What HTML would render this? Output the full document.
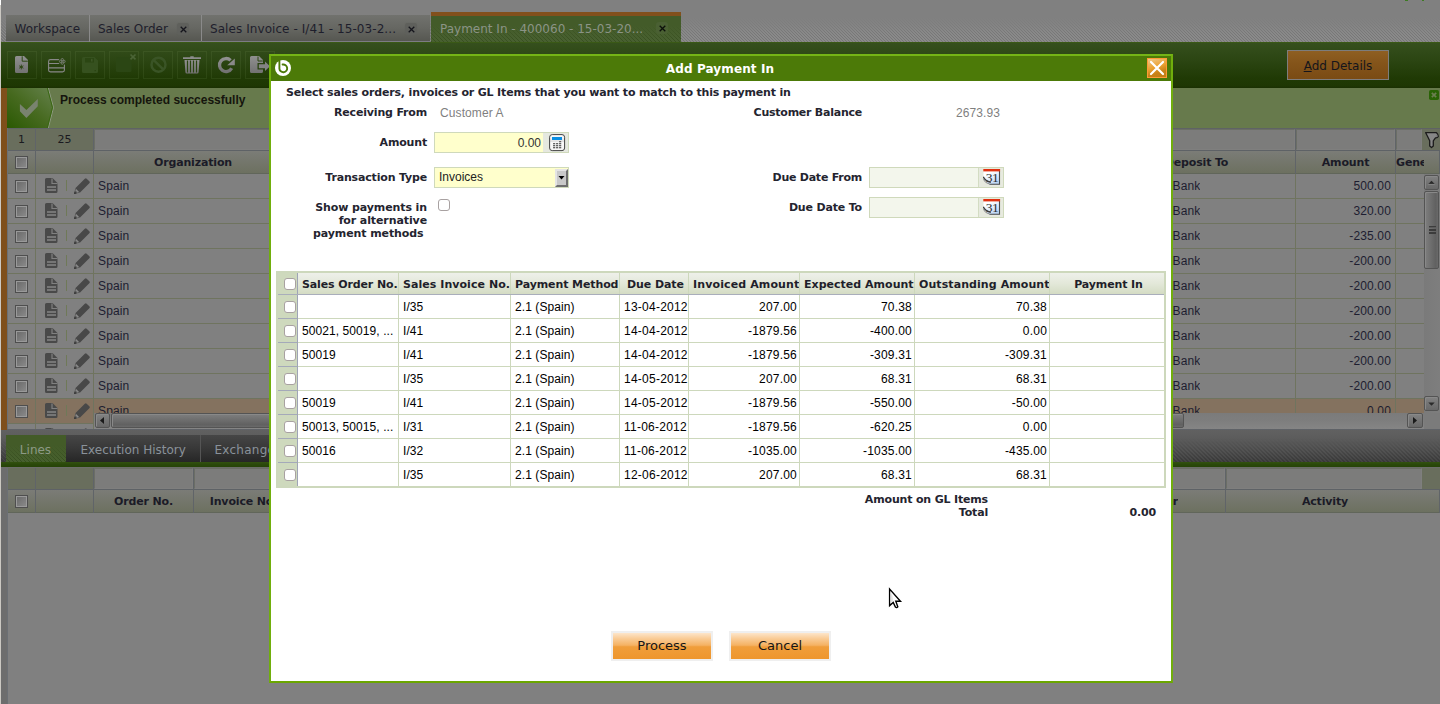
<!DOCTYPE html>
<html>
<head>
<meta charset="utf-8">
<title>Add Payment In</title>
<style>
html,body{margin:0;padding:0;}
body{width:1440px;height:704px;overflow:hidden;position:relative;background:#808080;font-family:"DejaVu Sans","Liberation Sans",sans-serif;font-size:11px;color:#1c1c24;}
.a{position:absolute;}
.dv{font-family:"DejaVu Sans","Liberation Sans",sans-serif;}
.ar{font-family:"Liberation Sans","DejaVu Sans",sans-serif;}
#tabstrip{left:1px;top:18px;width:1439px;height:24px;background:linear-gradient(#808080,rgba(128,128,128,0) 70%),repeating-linear-gradient(45deg,#777 0 1px,#8a8a8a 1px 2.12px);}
.tab{top:15px;height:27px;background:linear-gradient(#71726e,#666762 50%,#565751);color:#1e1e2c;font-size:12px;line-height:29px;white-space:nowrap;box-sizing:border-box;border-bottom:1px solid #7c7c84;}
.tab .t{position:absolute;top:0;}
.tabx{position:absolute;top:8px;width:12px;height:12px;border-radius:3px;background:#5f605c;box-shadow:0 0 1px #5f605c;}
#tabsel{left:431px;top:12px;width:250px;height:30px;background:linear-gradient(#435b29 35%,rgba(67,91,41,0) 90%),repeating-linear-gradient(45deg,#3a5122 0 1px,#486030 1px 2.83px);border-top:4px solid #82501c;box-sizing:border-box;color:#8b9486;font-size:12px;line-height:26px;}
#toolbar{left:1px;top:42px;width:1439px;height:46px;background:linear-gradient(#3e5f12 0,#354f1d 3%,#2c4613 38%,#203a05 78%,#1e3703 95%,#1a3002 100%);}
.tbtn{top:51px;width:30px;height:28px;border:1px solid rgba(160,190,130,0.10);box-sizing:border-box;}
#msg{left:7px;top:88px;width:1433px;height:40px;background:#677a4c;}
#strip{left:1px;top:88px;width:6px;height:342px;background:#7f4f1b;}
#leftedge{left:0;top:0;width:1px;height:704px;background:linear-gradient(#fff 0,#fff 5px,#cbc8c2 5px);}
.hl{height:1px;background:#6f745f;}
.vl{width:1px;background:#6f745f;}
.hdrrow{background:linear-gradient(#7b7c77,#6c705f);}
.hdr{font-weight:bold;font-size:11px;color:#1b1b27;text-align:center;line-height:24px;height:22px;white-space:nowrap;overflow:hidden;letter-spacing:-0.15px;}
.cell{font-family:"Liberation Sans",sans-serif;font-size:12px;color:#1d1d30;letter-spacing:0.15px;line-height:24px;white-space:nowrap;overflow:hidden;}
.cb{width:13px;height:13px;box-sizing:border-box;border:1px solid #4e4e4e;background:linear-gradient(135deg,#686868,#8c8c8c);box-shadow:inset 0 0 0 1px #9a9a9a;}
.fin{background:#7c7c7b;border:1px solid #6b6e66;border-right-color:#7f7f7e;border-bottom-color:#7f7f7e;box-sizing:border-box;}
/* dialog */
#dlg{left:269px;top:54px;width:904px;height:629px;background:#fff;border:2px solid #70ae0c;border-top-color:#75b416;border-bottom-color:#6aa600;box-sizing:border-box;}
#dlgtitle{left:0;top:0;width:898px;height:25px;background:#4c7a08;color:#fff;font-weight:bold;font-size:12px;line-height:26px;text-align:center;letter-spacing:0.12px;overflow:hidden;padding-right:2px;}
.lbl{font-weight:bold;font-size:11px;color:#24242f;text-align:right;white-space:nowrap;line-height:13px;letter-spacing:-0.17px;}
.val{font-family:"Liberation Sans",sans-serif;font-size:12px;color:#7f7f7f;white-space:nowrap;line-height:14px;letter-spacing:0.1px;}
.th{font-weight:bold;font-size:11px;color:#1f1f2b;line-height:23px;white-space:nowrap;overflow:hidden;letter-spacing:-0.08px;}
.td{font-family:"Liberation Sans",sans-serif;font-size:12px;color:#000;line-height:25px;white-space:nowrap;overflow:hidden;letter-spacing:0.08px;height:23px;}
.dl{background:#cdd8bc;}
.dcb{width:12px;height:12px;box-sizing:border-box;border:1px solid #a8a1a1;border-radius:3px;background:#fff;}
.btn{height:30px;width:102px;box-sizing:border-box;border:2px solid #efefef;background:linear-gradient(#fde5ca 0,#f9cb95 22%,#f5b263 47%,#f09e3b 53%,#ee962d 100%);font-size:13px;color:#151515;text-align:center;line-height:26px;}
</style>
</head>
<body>
<div class="a" style="left:1405px;top:0;width:3px;height:1px;background:#3d7a22;"></div><div class="a" style="left:1422px;top:0;width:2px;height:1px;background:#3d7a22;"></div>
<div class="a" id="tabstrip"></div>
<div class="a tab" style="left:6px;width:83px;"><span class="t" style="left:8.500px;">Workspace</span></div><div class="a" style="left:89px;top:15px;width:1px;height:26px;background:#8a8a8a;"></div>
<div class="a tab" style="left:90px;width:111px;"><span class="t" style="left:8px;">Sales Order</span><span class="tabx" style="left:87px;"><svg class="a" style="left:2.500px;top:2.500px" width="7" height="7" viewBox="0 0 7 7"><path d="M0.700 0.700L6.300 6.300M6.300 0.700L0.700 6.300" stroke="#15151c" stroke-width="1.300" fill="none"/></svg></span></div>
<div class="a" style="left:201px;top:15px;width:1px;height:26px;background:#8a8a8a;"></div><div class="a tab" style="left:202px;width:228px;"><span class="t" style="left:8px;letter-spacing:0.07px">Sales Invoice - I/41 - 15-03-2...</span><span class="tabx" style="left:203px;"><svg class="a" style="left:2.500px;top:2.500px" width="7" height="7" viewBox="0 0 7 7"><path d="M0.700 0.700L6.300 6.300M6.300 0.700L0.700 6.300" stroke="#15151c" stroke-width="1.300" fill="none"/></svg></span></div>
<div class="a" id="tabsel"><span class="a" style="left:9px;top:0;white-space:nowrap;">Payment In - 400060 - 15-03-20...</span><span class="tabx" style="left:225px;top:6px;background:#4a6033;box-shadow:none;"><svg class="a" style="left:2.500px;top:2.500px" width="7" height="7" viewBox="0 0 7 7"><path d="M0.700 0.700L6.300 6.300M6.300 0.700L0.700 6.300" stroke="#0c100a" stroke-width="1.300" fill="none"/></svg></span></div>
<div class="a" id="toolbar"></div>
<div class="a tbtn" style="left:7px;"></div>
<div class="a tbtn" style="left:41px;"></div>
<div class="a tbtn" style="left:75px;"></div>
<div class="a tbtn" style="left:109px;"></div>
<div class="a tbtn" style="left:143px;"></div>
<div class="a tbtn" style="left:177px;"></div>
<div class="a tbtn" style="left:211px;"></div>
<div class="a tbtn" style="left:245px;"></div>
<svg class="a" style="left:0;top:42px" width="272" height="46" viewBox="0 0 272 46"><defs><linearGradient id="tg" x1="0" y1="0" x2="0" y2="1"><stop offset="0" stop-color="#909090"/><stop offset="1" stop-color="#727272"/></linearGradient></defs><path d="M16.500 14H24L28 18V29.500A1.500 1.500 0 0 1 26.500 31H16.500A1.500 1.500 0 0 1 15 29.500V15.500A1.500 1.500 0 0 1 16.500 14z" fill="url(#tg)"/><path d="M22.200 14.300V19.200H27.800" fill="none" stroke="#2c4713" stroke-width="1"/><path d="M21.300 22.600V27.400M19.200 23.800L23.400 26.200M23.400 23.800L19.200 26.200" stroke="#2a4410" stroke-width="0.900" fill="none"/><rect x="48.600" y="17.600" width="15.800" height="12.300" rx="1.800" fill="none" stroke="#888" stroke-width="1.100"/><path d="M48.600 21.500H64.400M48.600 25.900H64.400" stroke="#888" stroke-width="1.100"/><circle cx="62.300" cy="19.400" r="3.700" fill="#2e4915"/><circle cx="62.3" cy="17.6" r="1.100" fill="none" stroke="#8a8a8a" stroke-width="0.700"/><circle cx="62.3" cy="21.2" r="1.100" fill="none" stroke="#8a8a8a" stroke-width="0.700"/><circle cx="60.5" cy="19.4" r="1.100" fill="none" stroke="#8a8a8a" stroke-width="0.700"/><circle cx="64.1" cy="19.4" r="1.100" fill="none" stroke="#8a8a8a" stroke-width="0.700"/><path d="M83.500 15H94.500L98 18.500V29.500A1.500 1.500 0 0 1 96.500 31H83.500A1.500 1.500 0 0 1 82 29.500V16.500A1.500 1.500 0 0 1 83.500 15z" fill="#36511f"/><rect x="85" y="16" width="9" height="4.500" fill="#2b4613"/><rect x="91" y="16.800" width="1.600" height="2.800" fill="#3d5727"/><rect x="94.600" y="28" width="1.200" height="1.200" fill="#28420f"/><rect x="116" y="15.500" width="15.500" height="14.500" rx="1.500" fill="#2b4614"/><path d="M130.500 12.500L135.500 17.300M135.500 12.500L130.500 17.300" stroke="#4b6436" stroke-width="1.700"/><circle cx="158.500" cy="22.700" r="7" fill="none" stroke="#3a5426" stroke-width="2.500"/><path d="M153.500 17.800L163.500 27.600" stroke="#3a5426" stroke-width="2.500"/><path d="M183 15.200H201V17H183z M190.300 14.300H193.700V15.200H190.300z" fill="#8c8c8c"/><path d="M184.500 18H199.500L198.600 30A1.500 1.500 0 0 1 197.100 31.500H186.900A1.500 1.500 0 0 1 185.400 30z" fill="url(#tg)"/><path d="M187.500 18.500V30.500M190.500 18.500V30.500M193.500 18.500V30.500M196.500 18.500V30.500" stroke="#2a4511" stroke-width="1.200"/><path d="M230.600 18.400A6.500 6.500 0 1 0 231.700 26.200" fill="none" stroke="url(#tg)" stroke-width="3.300"/><path d="M227.200 23.200H234.800V16.400z" fill="#898989"/><path d="M251.500 14H259L263 18V21H257.500V27.500H263V29.500A1.500 1.500 0 0 1 261.500 31H251.500A1.500 1.500 0 0 1 250 29.500V15.500A1.500 1.500 0 0 1 251.500 14z" fill="url(#tg)"/><path d="M258 14.500V19H262.700" fill="none" stroke="#2c4713" stroke-width="1"/><path d="M258.800 22.300H265V19.500L270 24.300L265 29.100V26.300H258.800z" fill="#838383"/></svg>
<div class="a" style="left:1287px;top:50px;width:102px;height:30px;box-sizing:border-box;border:1px solid #7d7d7d;background:linear-gradient(#8e5f22,#84541a 45%,#7a4b14);font-size:12px;line-height:30px;text-align:center;color:#15151c;"><span style="text-decoration:underline">A</span>dd Details</div>
<div class="a" id="msg"></div>
<svg class="a" style="left:7px;top:88px" width="48" height="40" viewBox="0 0 48 40"><defs><linearGradient id="mg" x1="0" y1="1" x2="1" y2="0"><stop offset="0" stop-color="#2a5902"/><stop offset="0.500" stop-color="#476a20"/><stop offset="1" stop-color="#65814d"/></linearGradient></defs><path d="M0 0H40.700L46 19.500L40.700 40H0z" fill="url(#mg)"/><path d="M41.300 0L46.500 19.500L41.300 40" fill="none" stroke="#929f86" stroke-width="0.900"/><path d="M40.300 0L45.500 19.500L40.300 40" fill="none" stroke="#3a6712" stroke-width="1"/><path d="M12.900 15.900L19.400 22.100L30.800 11.100V18.200L19.400 29.900L12.900 23.300z" fill="#79836f"/></svg>
<div class="a ar" style="left:60px;top:92px;font-weight:bold;font-size:12px;line-height:16px;color:#15150d;white-space:nowrap;">Process completed successfully</div>
<svg class="a" style="left:1429px;top:90px" width="10" height="10" viewBox="0 0 10 10"><rect x="0" y="0" width="10" height="10" rx="1.800" fill="#2a6306"/><path d="M2.800 2.800L7.200 7.200M7.200 2.800L2.800 7.200" stroke="#6c7e52" stroke-width="1.700"/></svg>
<div class="a" id="strip"></div>
<div class="a" style="left:7px;top:128px;width:1433px;height:23px;background:#696e5d;"></div>
<div class="a" style="left:7px;top:128px;width:1433px;height:1px;background:#5f6364;"></div>
<div class="a" style="left:7px;top:150px;width:1433px;height:1px;background:#5e6266;"></div>
<div class="a dv" style="left:8px;top:129px;width:27px;text-align:center;font-size:11px;line-height:21px;color:#1a1a20;">1</div>
<div class="a dv" style="left:36px;top:129px;width:57px;text-align:center;font-size:11px;line-height:21px;color:#1a1a20;">25</div>
<div class="a fin" style="left:94px;top:129px;width:1201px;height:21px;"></div>
<div class="a fin" style="left:1296px;top:129px;width:99px;height:21px;"></div>
<div class="a fin" style="left:1396px;top:129px;width:26px;height:21px;"></div>
<svg class="a" style="left:1424px;top:131px" width="16" height="18" viewBox="0 0 16 18"><path d="M1.700 1.700H12.500Q14.500 3.500 14.300 5.500Q13.500 7 11.500 6.800L9.300 9.800V15L7.500 16.500L5.700 15V9.800z" fill="#878787" stroke="#1c1c1c" stroke-width="1.300" stroke-linejoin="round"/><circle cx="12.600" cy="5" r="0.900" fill="#7a7a7a"/></svg>
<div class="a hdrrow" style="left:7px;top:151px;width:1433px;height:23px;"></div>
<div class="a" style="left:7px;top:173px;width:1433px;height:1px;background:#61665a;"></div>
<div class="a hdr" style="left:94px;top:151px;width:198px;">Organization</div>
<div class="a hdr" style="left:1099px;top:151px;width:195px;">Deposit To</div>
<div class="a hdr" style="left:1296px;top:151px;width:99px;">Amount</div>
<div class="a hdr" style="left:1396px;top:151px;width:28px;text-align:left;">Generated</div>
<div class="a cb" style="left:15px;top:156px;"></div>
<div class="a" style="left:0;top:174px;width:1440px;height:255px;overflow:hidden;">
<div class="a hl" style="left:7px;top:24px;width:1433px;"></div>
<div class="a cb" style="left:15px;top:6px;"></div>
<svg class="a" style="left:45px;top:4px" width="13" height="15" viewBox="0 0 13 15"><path d="M1.500 0h6l5 5v8.500a1.500 1.500 0 0 1-1.500 1.500h-9.500A1.500 1.500 0 0 1 0 13.500v-12A1.500 1.500 0 0 1 1.500 0z" fill="#494949"/><path d="M7 0.500v5h5.500" stroke="#808080" stroke-width="1.200" fill="none"/><path d="M2 9h9M2 12h9" stroke="#858585" stroke-width="1.300"/></svg>
<div class="a" style="left:66px;top:6px;width:1px;height:11px;background:#6f7958;"></div>
<svg class="a" style="left:74px;top:4px" width="16" height="16" viewBox="0 0 16 16"><path d="M10.800 0.700a1.300 1.300 0 0 1 1.900 0l2.600 2.600a1.300 1.300 0 0 1 0 1.900L5.800 14.700L1.300 10.200z" fill="#484848"/><path d="M1.300 10.200L0 16L5.800 14.700z" fill="#5a5a5a"/><path d="M1.800 11.800l2.400 2.400" stroke="#8a8a8a" stroke-width="1.400"/><path d="M0 16l0.600-2.600l2 2z" fill="#333"/></svg>
<div class="a cell" style="left:98px;top:0px;">Spain</div>
<div class="a cell" style="left:1172.500px;top:0px;">Bank</div>
<div class="a cell" style="left:1296px;top:0px;width:95px;text-align:right;">500.00</div>
<div class="a hl" style="left:7px;top:49px;width:1433px;"></div>
<div class="a cb" style="left:15px;top:31px;"></div>
<svg class="a" style="left:45px;top:29px" width="13" height="15" viewBox="0 0 13 15"><path d="M1.500 0h6l5 5v8.500a1.500 1.500 0 0 1-1.500 1.500h-9.500A1.500 1.500 0 0 1 0 13.500v-12A1.500 1.500 0 0 1 1.500 0z" fill="#494949"/><path d="M7 0.500v5h5.500" stroke="#808080" stroke-width="1.200" fill="none"/><path d="M2 9h9M2 12h9" stroke="#858585" stroke-width="1.300"/></svg>
<div class="a" style="left:66px;top:31px;width:1px;height:11px;background:#6f7958;"></div>
<svg class="a" style="left:74px;top:29px" width="16" height="16" viewBox="0 0 16 16"><path d="M10.800 0.700a1.300 1.300 0 0 1 1.900 0l2.600 2.600a1.300 1.300 0 0 1 0 1.900L5.800 14.700L1.300 10.200z" fill="#484848"/><path d="M1.300 10.200L0 16L5.800 14.700z" fill="#5a5a5a"/><path d="M1.800 11.800l2.400 2.400" stroke="#8a8a8a" stroke-width="1.400"/><path d="M0 16l0.600-2.600l2 2z" fill="#333"/></svg>
<div class="a cell" style="left:98px;top:25px;">Spain</div>
<div class="a cell" style="left:1172.500px;top:25px;">Bank</div>
<div class="a cell" style="left:1296px;top:25px;width:95px;text-align:right;">320.00</div>
<div class="a hl" style="left:7px;top:74px;width:1433px;"></div>
<div class="a cb" style="left:15px;top:56px;"></div>
<svg class="a" style="left:45px;top:54px" width="13" height="15" viewBox="0 0 13 15"><path d="M1.500 0h6l5 5v8.500a1.500 1.500 0 0 1-1.500 1.500h-9.500A1.500 1.500 0 0 1 0 13.500v-12A1.500 1.500 0 0 1 1.500 0z" fill="#494949"/><path d="M7 0.500v5h5.500" stroke="#808080" stroke-width="1.200" fill="none"/><path d="M2 9h9M2 12h9" stroke="#858585" stroke-width="1.300"/></svg>
<div class="a" style="left:66px;top:56px;width:1px;height:11px;background:#6f7958;"></div>
<svg class="a" style="left:74px;top:54px" width="16" height="16" viewBox="0 0 16 16"><path d="M10.800 0.700a1.300 1.300 0 0 1 1.900 0l2.600 2.600a1.300 1.300 0 0 1 0 1.900L5.800 14.700L1.300 10.200z" fill="#484848"/><path d="M1.300 10.200L0 16L5.800 14.700z" fill="#5a5a5a"/><path d="M1.800 11.800l2.400 2.400" stroke="#8a8a8a" stroke-width="1.400"/><path d="M0 16l0.600-2.600l2 2z" fill="#333"/></svg>
<div class="a cell" style="left:98px;top:50px;">Spain</div>
<div class="a cell" style="left:1172.500px;top:50px;">Bank</div>
<div class="a cell" style="left:1296px;top:50px;width:95px;text-align:right;">-235.00</div>
<div class="a hl" style="left:7px;top:99px;width:1433px;"></div>
<div class="a cb" style="left:15px;top:81px;"></div>
<svg class="a" style="left:45px;top:79px" width="13" height="15" viewBox="0 0 13 15"><path d="M1.500 0h6l5 5v8.500a1.500 1.500 0 0 1-1.500 1.500h-9.500A1.500 1.500 0 0 1 0 13.500v-12A1.500 1.500 0 0 1 1.500 0z" fill="#494949"/><path d="M7 0.500v5h5.500" stroke="#808080" stroke-width="1.200" fill="none"/><path d="M2 9h9M2 12h9" stroke="#858585" stroke-width="1.300"/></svg>
<div class="a" style="left:66px;top:81px;width:1px;height:11px;background:#6f7958;"></div>
<svg class="a" style="left:74px;top:79px" width="16" height="16" viewBox="0 0 16 16"><path d="M10.800 0.700a1.300 1.300 0 0 1 1.900 0l2.600 2.600a1.300 1.300 0 0 1 0 1.900L5.800 14.700L1.300 10.200z" fill="#484848"/><path d="M1.300 10.200L0 16L5.800 14.700z" fill="#5a5a5a"/><path d="M1.800 11.800l2.400 2.400" stroke="#8a8a8a" stroke-width="1.400"/><path d="M0 16l0.600-2.600l2 2z" fill="#333"/></svg>
<div class="a cell" style="left:98px;top:75px;">Spain</div>
<div class="a cell" style="left:1172.500px;top:75px;">Bank</div>
<div class="a cell" style="left:1296px;top:75px;width:95px;text-align:right;">-200.00</div>
<div class="a hl" style="left:7px;top:124px;width:1433px;"></div>
<div class="a cb" style="left:15px;top:106px;"></div>
<svg class="a" style="left:45px;top:104px" width="13" height="15" viewBox="0 0 13 15"><path d="M1.500 0h6l5 5v8.500a1.500 1.500 0 0 1-1.500 1.500h-9.500A1.500 1.500 0 0 1 0 13.500v-12A1.500 1.500 0 0 1 1.500 0z" fill="#494949"/><path d="M7 0.500v5h5.500" stroke="#808080" stroke-width="1.200" fill="none"/><path d="M2 9h9M2 12h9" stroke="#858585" stroke-width="1.300"/></svg>
<div class="a" style="left:66px;top:106px;width:1px;height:11px;background:#6f7958;"></div>
<svg class="a" style="left:74px;top:104px" width="16" height="16" viewBox="0 0 16 16"><path d="M10.800 0.700a1.300 1.300 0 0 1 1.900 0l2.600 2.600a1.300 1.300 0 0 1 0 1.900L5.800 14.700L1.300 10.200z" fill="#484848"/><path d="M1.300 10.200L0 16L5.800 14.700z" fill="#5a5a5a"/><path d="M1.800 11.800l2.400 2.400" stroke="#8a8a8a" stroke-width="1.400"/><path d="M0 16l0.600-2.600l2 2z" fill="#333"/></svg>
<div class="a cell" style="left:98px;top:100px;">Spain</div>
<div class="a cell" style="left:1172.500px;top:100px;">Bank</div>
<div class="a cell" style="left:1296px;top:100px;width:95px;text-align:right;">-200.00</div>
<div class="a hl" style="left:7px;top:149px;width:1433px;"></div>
<div class="a cb" style="left:15px;top:131px;"></div>
<svg class="a" style="left:45px;top:129px" width="13" height="15" viewBox="0 0 13 15"><path d="M1.500 0h6l5 5v8.500a1.500 1.500 0 0 1-1.500 1.500h-9.500A1.500 1.500 0 0 1 0 13.500v-12A1.500 1.500 0 0 1 1.500 0z" fill="#494949"/><path d="M7 0.500v5h5.500" stroke="#808080" stroke-width="1.200" fill="none"/><path d="M2 9h9M2 12h9" stroke="#858585" stroke-width="1.300"/></svg>
<div class="a" style="left:66px;top:131px;width:1px;height:11px;background:#6f7958;"></div>
<svg class="a" style="left:74px;top:129px" width="16" height="16" viewBox="0 0 16 16"><path d="M10.800 0.700a1.300 1.300 0 0 1 1.900 0l2.600 2.600a1.300 1.300 0 0 1 0 1.900L5.800 14.700L1.300 10.200z" fill="#484848"/><path d="M1.300 10.200L0 16L5.800 14.700z" fill="#5a5a5a"/><path d="M1.800 11.800l2.400 2.400" stroke="#8a8a8a" stroke-width="1.400"/><path d="M0 16l0.600-2.600l2 2z" fill="#333"/></svg>
<div class="a cell" style="left:98px;top:125px;">Spain</div>
<div class="a cell" style="left:1172.500px;top:125px;">Bank</div>
<div class="a cell" style="left:1296px;top:125px;width:95px;text-align:right;">-200.00</div>
<div class="a hl" style="left:7px;top:174px;width:1433px;"></div>
<div class="a cb" style="left:15px;top:156px;"></div>
<svg class="a" style="left:45px;top:154px" width="13" height="15" viewBox="0 0 13 15"><path d="M1.500 0h6l5 5v8.500a1.500 1.500 0 0 1-1.500 1.500h-9.500A1.500 1.500 0 0 1 0 13.500v-12A1.500 1.500 0 0 1 1.500 0z" fill="#494949"/><path d="M7 0.500v5h5.500" stroke="#808080" stroke-width="1.200" fill="none"/><path d="M2 9h9M2 12h9" stroke="#858585" stroke-width="1.300"/></svg>
<div class="a" style="left:66px;top:156px;width:1px;height:11px;background:#6f7958;"></div>
<svg class="a" style="left:74px;top:154px" width="16" height="16" viewBox="0 0 16 16"><path d="M10.800 0.700a1.300 1.300 0 0 1 1.900 0l2.600 2.600a1.300 1.300 0 0 1 0 1.900L5.800 14.700L1.300 10.200z" fill="#484848"/><path d="M1.300 10.200L0 16L5.800 14.700z" fill="#5a5a5a"/><path d="M1.800 11.800l2.400 2.400" stroke="#8a8a8a" stroke-width="1.400"/><path d="M0 16l0.600-2.600l2 2z" fill="#333"/></svg>
<div class="a cell" style="left:98px;top:150px;">Spain</div>
<div class="a cell" style="left:1172.500px;top:150px;">Bank</div>
<div class="a cell" style="left:1296px;top:150px;width:95px;text-align:right;">-200.00</div>
<div class="a hl" style="left:7px;top:199px;width:1433px;"></div>
<div class="a cb" style="left:15px;top:181px;"></div>
<svg class="a" style="left:45px;top:179px" width="13" height="15" viewBox="0 0 13 15"><path d="M1.500 0h6l5 5v8.500a1.500 1.500 0 0 1-1.500 1.500h-9.500A1.500 1.500 0 0 1 0 13.500v-12A1.500 1.500 0 0 1 1.500 0z" fill="#494949"/><path d="M7 0.500v5h5.500" stroke="#808080" stroke-width="1.200" fill="none"/><path d="M2 9h9M2 12h9" stroke="#858585" stroke-width="1.300"/></svg>
<div class="a" style="left:66px;top:181px;width:1px;height:11px;background:#6f7958;"></div>
<svg class="a" style="left:74px;top:179px" width="16" height="16" viewBox="0 0 16 16"><path d="M10.800 0.700a1.300 1.300 0 0 1 1.900 0l2.600 2.600a1.300 1.300 0 0 1 0 1.900L5.800 14.700L1.300 10.200z" fill="#484848"/><path d="M1.300 10.200L0 16L5.800 14.700z" fill="#5a5a5a"/><path d="M1.800 11.800l2.400 2.400" stroke="#8a8a8a" stroke-width="1.400"/><path d="M0 16l0.600-2.600l2 2z" fill="#333"/></svg>
<div class="a cell" style="left:98px;top:175px;">Spain</div>
<div class="a cell" style="left:1172.500px;top:175px;">Bank</div>
<div class="a cell" style="left:1296px;top:175px;width:95px;text-align:right;">-200.00</div>
<div class="a hl" style="left:7px;top:224px;width:1433px;"></div>
<div class="a cb" style="left:15px;top:206px;"></div>
<svg class="a" style="left:45px;top:204px" width="13" height="15" viewBox="0 0 13 15"><path d="M1.500 0h6l5 5v8.500a1.500 1.500 0 0 1-1.500 1.500h-9.500A1.500 1.500 0 0 1 0 13.500v-12A1.500 1.500 0 0 1 1.500 0z" fill="#494949"/><path d="M7 0.500v5h5.500" stroke="#808080" stroke-width="1.200" fill="none"/><path d="M2 9h9M2 12h9" stroke="#858585" stroke-width="1.300"/></svg>
<div class="a" style="left:66px;top:206px;width:1px;height:11px;background:#6f7958;"></div>
<svg class="a" style="left:74px;top:204px" width="16" height="16" viewBox="0 0 16 16"><path d="M10.800 0.700a1.300 1.300 0 0 1 1.900 0l2.600 2.600a1.300 1.300 0 0 1 0 1.900L5.800 14.700L1.300 10.200z" fill="#484848"/><path d="M1.300 10.200L0 16L5.800 14.700z" fill="#5a5a5a"/><path d="M1.800 11.800l2.400 2.400" stroke="#8a8a8a" stroke-width="1.400"/><path d="M0 16l0.600-2.600l2 2z" fill="#333"/></svg>
<div class="a cell" style="left:98px;top:200px;">Spain</div>
<div class="a cell" style="left:1172.500px;top:200px;">Bank</div>
<div class="a cell" style="left:1296px;top:200px;width:95px;text-align:right;">-200.00</div>
<div class="a" style="left:7px;top:225px;width:1433px;height:24px;background:#84725f;"></div>
<div class="a hl" style="left:7px;top:249px;width:1433px;"></div>
<div class="a cb" style="left:15px;top:231px;"></div>
<svg class="a" style="left:45px;top:229px" width="13" height="15" viewBox="0 0 13 15"><path d="M1.500 0h6l5 5v8.500a1.500 1.500 0 0 1-1.500 1.500h-9.500A1.500 1.500 0 0 1 0 13.500v-12A1.500 1.500 0 0 1 1.500 0z" fill="#494949"/><path d="M7 0.500v5h5.500" stroke="#808080" stroke-width="1.200" fill="none"/><path d="M2 9h9M2 12h9" stroke="#858585" stroke-width="1.300"/></svg>
<div class="a" style="left:66px;top:231px;width:1px;height:11px;background:#6f7958;"></div>
<svg class="a" style="left:74px;top:229px" width="16" height="16" viewBox="0 0 16 16"><path d="M10.800 0.700a1.300 1.300 0 0 1 1.900 0l2.600 2.600a1.300 1.300 0 0 1 0 1.900L5.800 14.700L1.300 10.200z" fill="#484848"/><path d="M1.300 10.200L0 16L5.800 14.700z" fill="#5a5a5a"/><path d="M1.800 11.800l2.400 2.400" stroke="#8a8a8a" stroke-width="1.400"/><path d="M0 16l0.600-2.600l2 2z" fill="#333"/></svg>
<div class="a cell" style="left:98px;top:225px;">Spain</div>
<div class="a cell" style="left:1172.500px;top:225px;">Bank</div>
<div class="a cell" style="left:1296px;top:225px;width:95px;text-align:right;">0.00</div>
<div class="a hl" style="left:7px;top:274px;width:1433px;"></div>
<div class="a cb" style="left:15px;top:256px;"></div>
<svg class="a" style="left:45px;top:254px" width="13" height="15" viewBox="0 0 13 15"><path d="M1.500 0h6l5 5v8.500a1.500 1.500 0 0 1-1.500 1.500h-9.500A1.500 1.500 0 0 1 0 13.500v-12A1.500 1.500 0 0 1 1.500 0z" fill="#494949"/><path d="M7 0.500v5h5.500" stroke="#808080" stroke-width="1.200" fill="none"/><path d="M2 9h9M2 12h9" stroke="#858585" stroke-width="1.300"/></svg>
<div class="a" style="left:66px;top:256px;width:1px;height:11px;background:#6f7958;"></div>
<svg class="a" style="left:74px;top:254px" width="16" height="16" viewBox="0 0 16 16"><path d="M10.800 0.700a1.300 1.300 0 0 1 1.900 0l2.600 2.600a1.300 1.300 0 0 1 0 1.900L5.800 14.700L1.300 10.200z" fill="#484848"/><path d="M1.300 10.200L0 16L5.800 14.700z" fill="#5a5a5a"/><path d="M1.800 11.800l2.400 2.400" stroke="#8a8a8a" stroke-width="1.400"/><path d="M0 16l0.600-2.600l2 2z" fill="#333"/></svg>
</div>
<div class="a vl" style="left:7px;top:128px;height:302px;background:#6b6f74;"></div>
<div class="a vl" style="left:35px;top:128px;height:301px;"></div>
<div class="a" style="left:35px;top:128px;width:1px;height:46px;background:#606468;"></div>
<div class="a vl" style="left:93px;top:128px;height:301px;"></div>
<div class="a" style="left:93px;top:128px;width:1px;height:46px;background:#606468;"></div>
<div class="a vl" style="left:1295px;top:128px;height:286px;"></div>
<div class="a" style="left:1295px;top:128px;width:1px;height:46px;background:#606468;"></div>
<div class="a vl" style="left:1395px;top:128px;height:286px;"></div>
<div class="a" style="left:1395px;top:128px;width:1px;height:46px;background:#606468;"></div>
<div class="a" style="left:1439px;top:151px;width:1px;height:23px;background:#606468;"></div>
<div class="a" style="left:1424px;top:174px;width:16px;height:239px;background:linear-gradient(90deg,#7a7a7a,#7e7e7e);"></div>
<div class="a" style="left:1424px;top:175px;width:15px;height:15px;box-sizing:border-box;border:1px solid #545454;border-radius:2px;box-shadow:inset 1px 1px 0 #898989;background:linear-gradient(#828282,#747474 50%,#686868);"></div>
<svg class="a" style="left:1428px;top:180px" width="7" height="5" viewBox="0 0 7 5"><path d="M0.300 4L3.500 0.800L6.700 4z" fill="#2a2a2a"/><path d="M0.300 4.400H6.700" stroke="#8a8a8a" stroke-width="0.800"/></svg>
<div class="a" style="left:1424px;top:191px;width:15px;height:78px;box-sizing:border-box;border:1px solid #545454;border-radius:2px;box-shadow:inset 1px 1px 0 #898989;background:linear-gradient(90deg,#7e7e7e,#707070 40%,#616161 82%,#6a6a6a);"></div>
<div class="a" style="left:1429px;top:226px;width:7px;height:2px;background:linear-gradient(#2e2e2e,#6a6a6a);box-shadow:0 3px 0 #3c3c3c,0 6px 0 #3c3c3c;"></div>
<div class="a" style="left:1424px;top:396px;width:15px;height:15px;box-sizing:border-box;border:1px solid #545454;border-radius:2px;box-shadow:inset 1px 1px 0 #898989;background:linear-gradient(#828282,#747474 50%,#686868);"></div>
<svg class="a" style="left:1428px;top:402px" width="7" height="5" viewBox="0 0 7 5"><path d="M0.300 0.600L3.500 3.800L6.700 0.600z" fill="#2a2a2a"/></svg>
<div class="a" style="left:94px;top:413px;width:1346px;height:16px;background:linear-gradient(#7b7b7b,#7e7e7e 50%,#858585);"></div>
<div class="a" style="left:1424px;top:413px;width:16px;height:16px;background:#7b7b7b;"></div>
<div class="a" style="left:95px;top:413px;width:15px;height:15px;box-sizing:border-box;border:1px solid #545454;border-radius:2px;box-shadow:inset 1px 1px 0 #898989;background:linear-gradient(#828282,#747474 50%,#686868);"></div>
<svg class="a" style="left:100px;top:417px" width="4" height="7" viewBox="0 0 4 7"><path d="M4 0L0 3.500L4 7z" fill="#1a1a1a"/></svg>
<div class="a" style="left:111px;top:413px;width:1073px;height:15px;box-sizing:border-box;border:1px solid #545454;border-radius:2px;box-shadow:inset 1px 1px 0 #898989;background:linear-gradient(#7e7e7e,#707070 40%,#616161 82%,#6a6a6a);"></div>
<div class="a" style="left:1407px;top:413px;width:16px;height:15px;box-sizing:border-box;border:1px solid #545454;border-radius:2px;box-shadow:inset 1px 1px 0 #898989;background:linear-gradient(#828282,#747474 50%,#686868);"></div>
<svg class="a" style="left:1413px;top:417px" width="4" height="7" viewBox="0 0 4 7"><path d="M0 0L4 3.500L0 7z" fill="#1a1a1a"/></svg>
<div class="a" style="left:7px;top:429px;width:1433px;height:1px;background:#5f6267;"></div>
<div class="a" style="left:1px;top:430px;width:1439px;height:33px;background:linear-gradient(#616161 0,#5c5c5c 25%,#4e4e4e 60%,#393939 100%);"></div>
<div class="a" style="left:1px;top:438px;width:1439px;height:24px;background:repeating-linear-gradient(45deg,rgba(255,255,255,0.045) 0 1px,rgba(0,0,0,0.04) 1px 2.83px);-webkit-mask-image:linear-gradient(transparent,#000 60%);mask-image:linear-gradient(transparent,#000 60%);"></div>
<div class="a" style="left:6px;top:435px;width:60px;height:28px;background:linear-gradient(#435b28 35%,rgba(67,91,40,0) 95%),repeating-linear-gradient(45deg,#374e20 0 1px,#47602e 1px 2.83px);"></div>
<div class="a dv" style="left:6px;top:436px;width:59px;text-align:center;font-size:12px;line-height:28px;color:#8d9a86;">Lines</div>
<div class="a" style="left:66px;top:435px;width:1107px;height:28px;background:linear-gradient(#464646,#373737 50%,#252525);"></div>
<div class="a" style="left:200px;top:435px;width:1px;height:28px;background:#555;"></div>
<div class="a dv" style="left:80.500px;top:436px;font-size:12px;line-height:28px;color:#8a929a;white-space:nowrap;">Execution History</div>
<div class="a dv" style="left:214.500px;top:436px;font-size:12px;line-height:28px;color:#8a929a;white-space:nowrap;letter-spacing:0.25px;">Exchange Rates</div>
<div class="a" style="left:1px;top:462px;width:1439px;height:5px;background:linear-gradient(#32510f,#2a480a 50%,#264307);"></div>
<div class="a" style="left:1px;top:467px;width:1439px;height:1px;background:#6c6e6a;"></div>
<div class="a" style="left:7px;top:468px;width:1433px;height:22px;background:#696e5d;"></div>
<div class="a fin" style="left:94px;top:468px;width:99px;height:21px;"></div>
<div class="a fin" style="left:194px;top:468px;width:1031px;height:21px;"></div>
<div class="a fin" style="left:1226px;top:468px;width:196px;height:21px;"></div>
<div class="a" style="left:7px;top:489px;width:1433px;height:1px;background:#5e6266;"></div>
<div class="a hdrrow" style="left:7px;top:490px;width:1433px;height:23px;"></div>
<div class="a" style="left:7px;top:512px;width:1433px;height:1px;background:#61665a;"></div>
<div class="a hdr" style="left:94px;top:490px;width:99px;">Order No.</div>
<div class="a hdr" style="left:194px;top:490px;width:99px;">Invoice No.</div>
<div class="a hdr" style="left:1226px;top:490px;width:198px;">Activity</div>
<div class="a hdr" style="left:1080px;top:490px;width:98px;text-align:right;">Order</div>
<div class="a cb" style="left:15px;top:495px;"></div>
<div class="a vl" style="left:7px;top:468px;height:236px;background:#6b6f74;"></div>
<div class="a vl" style="left:35px;top:468px;height:45px;background:#606468;"></div>
<div class="a vl" style="left:93px;top:468px;height:45px;background:#606468;"></div>
<div class="a vl" style="left:193px;top:468px;height:45px;background:#606468;"></div>
<div class="a vl" style="left:1225px;top:468px;height:45px;background:#606468;"></div>
<div class="a vl" style="left:1439px;top:490px;height:23px;background:#606468;"></div>
<div class="a" style="left:8px;top:513px;width:1432px;height:191px;background:#808080;"></div>
<div class="a" style="left:1px;top:467px;width:6px;height:237px;background:#6d6d6d;"></div>
<div class="a" id="leftedge"></div>
<div class="a" id="dlg">
<div class="a" id="dlgtitle">Add Payment In</div>
<svg class="a" style="left:2px;top:2px" width="20" height="20" viewBox="0 0 20 20"><circle cx="10" cy="10" r="8" fill="#fff"/><path d="M6.400 2.300V10.600A3.900 3.900 0 1 0 9.600 6.500" stroke="#4c7a08" stroke-width="1.900" fill="none" stroke-linecap="round"/></svg>
<div class="a" style="left:876px;top:2px;width:20px;height:20px;box-sizing:border-box;border:1px solid #ff9a36;background:linear-gradient(160deg,#f1c98c 0,#eba02f 45%,#c98217 70%,#c27c14 100%);"></div>
<svg class="a" style="left:876px;top:2px" width="20" height="20" viewBox="0 0 20 20"><path d="M4 4L16 16M16 4L4 16" stroke="#fff" stroke-width="2.200" stroke-linecap="round"/></svg>
</div>
<div class="a lbl" style="left:286px;top:86px;text-align:left;">Select sales orders, invoices or GL Items that you want to match to this payment in</div>
<div class="a lbl" style="right:1013px;top:106px;">Receiving From</div>
<div class="a val" style="left:440px;top:106px;">Customer A</div>
<div class="a lbl" style="right:578px;top:106px;letter-spacing:-0.24px;">Customer Balance</div>
<div class="a val" style="left:956px;top:106px;">2673.93</div>
<div class="a lbl" style="right:1013px;top:136px;">Amount</div>
<div class="a" style="left:434px;top:132px;width:135px;height:21px;box-sizing:border-box;border:1px solid #cfd9bb;background:#ffffcc;"></div>
<div class="a" style="left:543px;top:133px;width:25px;height:19px;background:#e5e8df;"></div>
<div class="a ar" style="left:436px;top:134px;width:105px;text-align:right;font-size:12px;line-height:19px;color:#333;">0.00</div>
<svg class="a" style="left:548px;top:133px" width="18" height="19" viewBox="0 0 18 19"><defs><linearGradient id="cg" x1="0" y1="0" x2="0" y2="1"><stop offset="0" stop-color="#fff"/><stop offset="0.450" stop-color="#e2e2e2"/><stop offset="0.500" stop-color="#fafafa"/><stop offset="1" stop-color="#f4f4f4"/></linearGradient></defs><rect x="1.600" y="1.600" width="15" height="16" rx="2.600" fill="url(#cg)" stroke="#444" stroke-width="1"/><rect x="4" y="4" width="10" height="3" fill="#0a8fe3"/><rect x="11" y="8.300" width="2.300" height="1" rx="0.400" fill="#333"/><g fill="#2e2e2e"><rect x="5" y="10.2" width="2.300" height="1.100" rx="0.400"/><rect x="8" y="10.2" width="2.300" height="1.100" rx="0.400"/><rect x="11" y="10.2" width="2.300" height="1.100" rx="0.400"/><rect x="5" y="12.2" width="2.300" height="1.100" rx="0.400"/><rect x="8" y="12.2" width="2.300" height="1.100" rx="0.400"/><rect x="11" y="12.2" width="2.300" height="1.100" rx="0.400"/><rect x="5" y="14.2" width="2.300" height="1.100" rx="0.400"/><rect x="8" y="14.2" width="2.300" height="1.100" rx="0.400"/><rect x="11" y="14.2" width="2.300" height="1.100" rx="0.400"/></g></svg>
<div class="a lbl" style="right:1013px;top:171px;">Transaction Type</div>
<div class="a" style="left:434px;top:167px;width:135px;height:21px;box-sizing:border-box;border:1px solid #cfd9bb;background:#ffffcc;"></div>
<div class="a ar" style="left:439px;top:168px;font-size:12px;line-height:19px;color:#222;">Invoices</div>
<div class="a" style="left:555px;top:169px;width:13px;height:18px;box-sizing:border-box;background:#c9c9c9;border:2px solid;border-color:#e4e4e4 #6e6e6e #6e6e6e #e4e4e4;"></div>
<svg class="a" style="left:558px;top:176px" width="7" height="4" viewBox="0 0 7 4"><path d="M0.500 0h6L3.500 3.500z" fill="#000"/></svg>
<div class="a lbl" style="right:1013px;top:201px;letter-spacing:-0.1px;">Show payments in<br>for alternative<br><span style="padding-right:3.500px">payment methods</span></div>
<div class="a dcb" style="left:438px;top:199px;"></div>
<div class="a lbl" style="right:578px;top:171px;letter-spacing:-0.24px;">Due Date From</div>
<div class="a lbl" style="right:578px;top:201px;">Due Date To</div>
<div class="a" style="left:869px;top:167px;width:135px;height:21px;box-sizing:border-box;border:1px solid #cfd9bb;background:#f3f6ec;"></div>
<div class="a" style="left:978px;top:168px;width:25px;height:19px;background:#e7eadf;border-left:1px solid #d3dcc3;box-sizing:border-box;"></div>
<svg class="a" style="left:983px;top:169px" width="18" height="17" viewBox="0 0 18 17"><defs><linearGradient id="kg169" x1="0" y1="0" x2="0.600" y2="1"><stop offset="0.350" stop-color="#fff"/><stop offset="1" stop-color="#bcd6f6"/></linearGradient></defs><path d="M0.500 0H17V15.500H7Q1.500 14 0.500 8z" fill="url(#kg169)"/><path d="M16.500 2V15.300H6.500" fill="none" stroke="#4a4a4a" stroke-width="1.100"/><rect x="0.300" y="0" width="16.800" height="2.400" fill="#e2300f"/><text x="9" y="12.800" font-family="Liberation Serif, serif" font-size="13.500" text-anchor="middle" fill="#2e2e2e" letter-spacing="-0.500">31</text><path d="M0.300 7.800Q2 12 7.800 13.300" fill="none" stroke="#3a3a3a" stroke-width="1.300"/><path d="M0.300 10.300Q1.800 14 7 15.300" fill="none" stroke="#8a8a8a" stroke-width="1"/><path d="M0 11.500Q1 15 5.500 16.500H0z" fill="#e7eadf"/></svg>
<div class="a" style="left:869px;top:197px;width:135px;height:21px;box-sizing:border-box;border:1px solid #cfd9bb;background:#f3f6ec;"></div>
<div class="a" style="left:978px;top:198px;width:25px;height:19px;background:#e7eadf;border-left:1px solid #d3dcc3;box-sizing:border-box;"></div>
<svg class="a" style="left:983px;top:199px" width="18" height="17" viewBox="0 0 18 17"><defs><linearGradient id="kg199" x1="0" y1="0" x2="0.600" y2="1"><stop offset="0.350" stop-color="#fff"/><stop offset="1" stop-color="#bcd6f6"/></linearGradient></defs><path d="M0.500 0H17V15.500H7Q1.500 14 0.500 8z" fill="url(#kg199)"/><path d="M16.500 2V15.300H6.500" fill="none" stroke="#4a4a4a" stroke-width="1.100"/><rect x="0.300" y="0" width="16.800" height="2.400" fill="#e2300f"/><text x="9" y="12.800" font-family="Liberation Serif, serif" font-size="13.500" text-anchor="middle" fill="#2e2e2e" letter-spacing="-0.500">31</text><path d="M0.300 7.800Q2 12 7.800 13.300" fill="none" stroke="#3a3a3a" stroke-width="1.300"/><path d="M0.300 10.300Q1.800 14 7 15.300" fill="none" stroke="#8a8a8a" stroke-width="1"/><path d="M0 11.500Q1 15 5.500 16.500H0z" fill="#e7eadf"/></svg>
<div class="a dl" style="left:276px;top:271px;width:890px;height:217px;"></div>
<div class="a" style="left:278px;top:273px;width:886px;height:213px;background:#fff;"></div>
<div class="a" style="left:278px;top:273px;width:886px;height:21px;background:linear-gradient(#eef0ea,#e3e8d9 50%,#d4dcc4);"></div>
<div class="a" style="left:278px;top:273px;width:19px;height:213px;background:#ced9bd;"></div>
<div class="a th" style="left:302px;top:273px;width:96px;letter-spacing:-0.12px">Sales Order No.</div>
<div class="a th" style="left:403px;top:273px;width:107px;letter-spacing:0.05px">Sales Invoice No.</div>
<div class="a th" style="left:515px;top:273px;width:104px;letter-spacing:-0.1px">Payment Method</div>
<div class="a th" style="left:621px;top:273px;width:69px;text-align:center;letter-spacing:-0.08px">Due Date</div>
<div class="a th" style="left:693px;top:273px;width:106px;letter-spacing:0.12px">Invoiced Amount</div>
<div class="a th" style="left:804px;top:273px;width:110px;letter-spacing:0.02px">Expected Amount</div>
<div class="a th" style="left:919px;top:273px;width:130px;letter-spacing:0.08px">Outstanding Amount</div>
<div class="a th" style="left:1051px;top:273px;width:115px;text-align:center;letter-spacing:-0.12px">Payment In</div>
<div class="a dcb" style="left:284px;top:278px;"></div>
<div class="a" style="left:278px;top:294px;width:886px;height:1px;background:#a9aebb;z-index:2"></div>
<div class="a dl" style="left:298px;top:294px;width:866px;height:1px;"></div>
<div class="a" style="left:278px;top:294px;width:20px;height:1px;background:#a4a9b9;"></div>
<div class="a dcb" style="left:284px;top:301px;"></div>
<div class="a td" style="left:403px;top:295px;width:107px;">I/35</div>
<div class="a td" style="left:515px;top:295px;width:104px;">2.1 (Spain)</div>
<div class="a td" style="left:624px;top:295px;width:64px;letter-spacing:0.24px;">13-04-2012</div>
<div class="a td" style="left:689px;top:295px;width:108px;text-align:right;letter-spacing:0.2px">207.00</div>
<div class="a td" style="left:800px;top:295px;width:112px;text-align:right;letter-spacing:0.2px">70.38</div>
<div class="a td" style="left:915px;top:295px;width:132px;text-align:right;letter-spacing:0.2px">70.38</div>
<div class="a dl" style="left:298px;top:318px;width:866px;height:1px;"></div>
<div class="a" style="left:278px;top:318px;width:20px;height:1px;background:#a4a9b9;"></div>
<div class="a dcb" style="left:284px;top:325px;"></div>
<div class="a td" style="left:302px;top:319px;width:96px;">50021, 50019, ...</div>
<div class="a td" style="left:403px;top:319px;width:107px;">I/41</div>
<div class="a td" style="left:515px;top:319px;width:104px;">2.1 (Spain)</div>
<div class="a td" style="left:624px;top:319px;width:64px;letter-spacing:0.24px;">14-04-2012</div>
<div class="a td" style="left:689px;top:319px;width:108px;text-align:right;letter-spacing:0.2px">-1879.56</div>
<div class="a td" style="left:800px;top:319px;width:112px;text-align:right;letter-spacing:0.2px">-400.00</div>
<div class="a td" style="left:915px;top:319px;width:132px;text-align:right;letter-spacing:0.2px">0.00</div>
<div class="a dl" style="left:298px;top:342px;width:866px;height:1px;"></div>
<div class="a" style="left:278px;top:342px;width:20px;height:1px;background:#a4a9b9;"></div>
<div class="a dcb" style="left:284px;top:349px;"></div>
<div class="a td" style="left:302px;top:343px;width:96px;">50019</div>
<div class="a td" style="left:403px;top:343px;width:107px;">I/41</div>
<div class="a td" style="left:515px;top:343px;width:104px;">2.1 (Spain)</div>
<div class="a td" style="left:624px;top:343px;width:64px;letter-spacing:0.24px;">14-04-2012</div>
<div class="a td" style="left:689px;top:343px;width:108px;text-align:right;letter-spacing:0.2px">-1879.56</div>
<div class="a td" style="left:800px;top:343px;width:112px;text-align:right;letter-spacing:0.2px">-309.31</div>
<div class="a td" style="left:915px;top:343px;width:132px;text-align:right;letter-spacing:0.2px">-309.31</div>
<div class="a dl" style="left:298px;top:366px;width:866px;height:1px;"></div>
<div class="a" style="left:278px;top:366px;width:20px;height:1px;background:#a4a9b9;"></div>
<div class="a dcb" style="left:284px;top:373px;"></div>
<div class="a td" style="left:403px;top:367px;width:107px;">I/35</div>
<div class="a td" style="left:515px;top:367px;width:104px;">2.1 (Spain)</div>
<div class="a td" style="left:624px;top:367px;width:64px;letter-spacing:0.24px;">14-05-2012</div>
<div class="a td" style="left:689px;top:367px;width:108px;text-align:right;letter-spacing:0.2px">207.00</div>
<div class="a td" style="left:800px;top:367px;width:112px;text-align:right;letter-spacing:0.2px">68.31</div>
<div class="a td" style="left:915px;top:367px;width:132px;text-align:right;letter-spacing:0.2px">68.31</div>
<div class="a dl" style="left:298px;top:390px;width:866px;height:1px;"></div>
<div class="a" style="left:278px;top:390px;width:20px;height:1px;background:#a4a9b9;"></div>
<div class="a dcb" style="left:284px;top:397px;"></div>
<div class="a td" style="left:302px;top:391px;width:96px;">50019</div>
<div class="a td" style="left:403px;top:391px;width:107px;">I/41</div>
<div class="a td" style="left:515px;top:391px;width:104px;">2.1 (Spain)</div>
<div class="a td" style="left:624px;top:391px;width:64px;letter-spacing:0.24px;">14-05-2012</div>
<div class="a td" style="left:689px;top:391px;width:108px;text-align:right;letter-spacing:0.2px">-1879.56</div>
<div class="a td" style="left:800px;top:391px;width:112px;text-align:right;letter-spacing:0.2px">-550.00</div>
<div class="a td" style="left:915px;top:391px;width:132px;text-align:right;letter-spacing:0.2px">-50.00</div>
<div class="a dl" style="left:298px;top:414px;width:866px;height:1px;"></div>
<div class="a" style="left:278px;top:414px;width:20px;height:1px;background:#a4a9b9;"></div>
<div class="a dcb" style="left:284px;top:421px;"></div>
<div class="a td" style="left:302px;top:415px;width:96px;">50013, 50015, ...</div>
<div class="a td" style="left:403px;top:415px;width:107px;">I/31</div>
<div class="a td" style="left:515px;top:415px;width:104px;">2.1 (Spain)</div>
<div class="a td" style="left:624px;top:415px;width:64px;letter-spacing:0.24px;">11-06-2012</div>
<div class="a td" style="left:689px;top:415px;width:108px;text-align:right;letter-spacing:0.2px">-1879.56</div>
<div class="a td" style="left:800px;top:415px;width:112px;text-align:right;letter-spacing:0.2px">-620.25</div>
<div class="a td" style="left:915px;top:415px;width:132px;text-align:right;letter-spacing:0.2px">0.00</div>
<div class="a dl" style="left:298px;top:438px;width:866px;height:1px;"></div>
<div class="a" style="left:278px;top:438px;width:20px;height:1px;background:#a4a9b9;"></div>
<div class="a dcb" style="left:284px;top:445px;"></div>
<div class="a td" style="left:302px;top:439px;width:96px;">50016</div>
<div class="a td" style="left:403px;top:439px;width:107px;">I/32</div>
<div class="a td" style="left:515px;top:439px;width:104px;">2.1 (Spain)</div>
<div class="a td" style="left:624px;top:439px;width:64px;letter-spacing:0.24px;">11-06-2012</div>
<div class="a td" style="left:689px;top:439px;width:108px;text-align:right;letter-spacing:0.2px">-1035.00</div>
<div class="a td" style="left:800px;top:439px;width:112px;text-align:right;letter-spacing:0.2px">-1035.00</div>
<div class="a td" style="left:915px;top:439px;width:132px;text-align:right;letter-spacing:0.2px">-435.00</div>
<div class="a dl" style="left:298px;top:462px;width:866px;height:1px;"></div>
<div class="a" style="left:278px;top:462px;width:20px;height:1px;background:#a4a9b9;"></div>
<div class="a dcb" style="left:284px;top:469px;"></div>
<div class="a td" style="left:403px;top:463px;width:107px;">I/35</div>
<div class="a td" style="left:515px;top:463px;width:104px;">2.1 (Spain)</div>
<div class="a td" style="left:624px;top:463px;width:64px;letter-spacing:0.24px;">12-06-2012</div>
<div class="a td" style="left:689px;top:463px;width:108px;text-align:right;letter-spacing:0.2px">207.00</div>
<div class="a td" style="left:800px;top:463px;width:112px;text-align:right;letter-spacing:0.2px">68.31</div>
<div class="a td" style="left:915px;top:463px;width:132px;text-align:right;letter-spacing:0.2px">68.31</div>
<div class="a dl" style="left:297px;top:273px;width:1px;height:213px;background:#9fa4b6;"></div>
<div class="a dl" style="left:398px;top:273px;width:1px;height:213px;"></div>
<div class="a dl" style="left:510px;top:273px;width:1px;height:213px;"></div>
<div class="a dl" style="left:619px;top:273px;width:1px;height:213px;"></div>
<div class="a dl" style="left:688px;top:273px;width:1px;height:213px;"></div>
<div class="a dl" style="left:799px;top:273px;width:1px;height:213px;"></div>
<div class="a dl" style="left:914px;top:273px;width:1px;height:213px;"></div>
<div class="a dl" style="left:1049px;top:273px;width:1px;height:213px;"></div>
<div class="a lbl" style="right:452px;top:493px;">Amount on GL Items</div>
<div class="a lbl" style="right:452px;top:506px;">Total</div>
<div class="a lbl" style="right:284px;top:506px;">0.00</div>
<div class="a btn dv" style="left:611px;top:631px;">Process</div>
<div class="a btn dv" style="left:729px;top:631px;">Cancel</div>
<svg class="a" style="left:887px;top:587px" width="17" height="23" viewBox="0 0 17 23"><path d="M2.600 2V18.600L6.200 15.400L8.400 20.100Q9.600 21.200 10.800 19.800L8.800 14.200H13.500z" fill="#fff" stroke="#000" stroke-width="1.400" stroke-linejoin="miter"/><path d="M3.500 4.500V16.500L6 14.500L5.500 9z" fill="#e4e4e4"/></svg>
</body>
</html>
